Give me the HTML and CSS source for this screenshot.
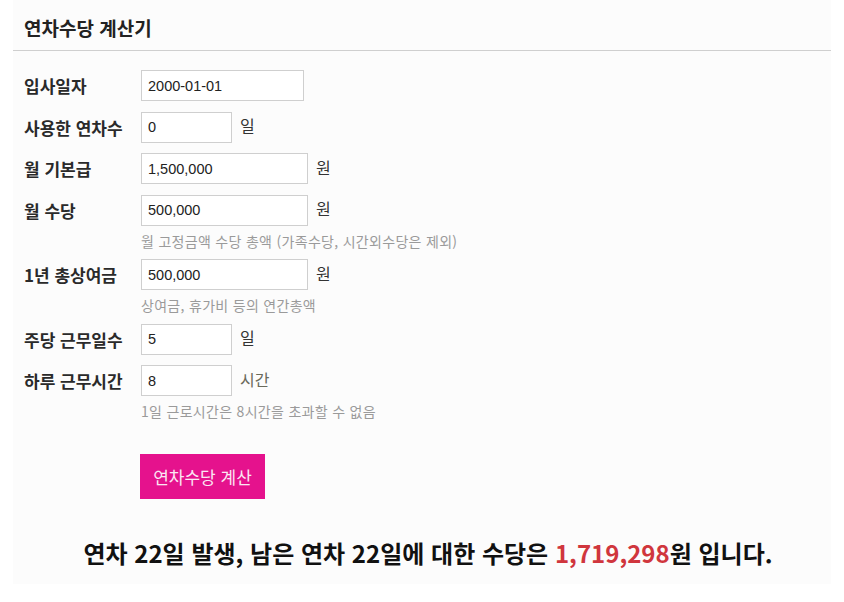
FILE: index.html
```html
<!DOCTYPE html>
<html lang="ko">
<head>
<meta charset="utf-8">
<title>연차수당 계산기</title>
<link rel="stylesheet" href="styles.css">
</head>
<body>
<div class="panel">
  <div class="header"><h1 class="title">연차수당 계산기</h1></div>
  <form class="form">
    <div class="field">
      <div class="row"><label class="label">입사일자</label><input class="input w163" type="text" value="2000-01-01"></div>
    </div>
    <div class="field">
      <div class="row"><label class="label">사용한 연차수</label><input class="input w91" type="text" value="0"><span class="unit">일</span></div>
    </div>
    <div class="field">
      <div class="row"><label class="label">월 기본급</label><input class="input w167" type="text" value="1,500,000"><span class="unit">원</span></div>
    </div>
    <div class="field">
      <div class="row"><label class="label">월 수당</label><input class="input w167" type="text" value="500,000"><span class="unit">원</span></div>
      <div class="hint">월 고정금액 수당 총액 (가족수당, 시간외수당은 제외)</div>
    </div>
    <div class="field">
      <div class="row"><label class="label">1년 총상여금</label><input class="input w167" type="text" value="500,000"><span class="unit">원</span></div>
      <div class="hint">상여금, 휴가비 등의 연간총액</div>
    </div>
    <div class="field">
      <div class="row"><label class="label">주당 근무일수</label><input class="input w91" type="text" value="5"><span class="unit">일</span></div>
    </div>
    <div class="field">
      <div class="row"><label class="label">하루 근무시간</label><input class="input w91" type="text" value="8"><span class="unit unit-light">시간</span></div>
      <div class="hint">1일 근로시간은 8시간을 초과할 수 없음</div>
    </div>
    <div class="actions"><button type="button" class="btn">연차수당 계산</button></div>
  </form>
  <p class="result">연차 22일 발생, 남은 연차 22일에 대한 수당은 <span class="amount">1,719,298</span>원 입니다.</p>
</div>
</body>
</html>
```

FILE: styles.css
```css
html, body {
  margin: 0;
  padding: 0;
  background: #ffffff;
}
body {
  font-family: "Noto Sans CJK KR", "Noto Sans", sans-serif;
  color: #222;
}
.panel {
  margin-left: 13px;
  width: 818px;
  height: 584px;
  background: #fcfcfc;
  box-sizing: border-box;
}
.header {
  height: 51px;
  box-sizing: border-box;
  padding: 18px 0 0 11px;
  border-bottom: 1px solid #cfcfcf;
}
.title {
  margin: 0;
  font-size: 19px;
  line-height: 20px;
  font-weight: 700;
  color: #222;
}
.form {
  margin: 0;
  padding: 19px 0 0 11px;
}
.field {
  margin-bottom: 10.5px;
}
.row {
  display: flex;
  align-items: center;
  height: 31px;
}
.label {
  width: 117px;
  flex: none;
  font-size: 17px;
  font-weight: 700;
  color: #2a2a2a;
}
.input {
  box-sizing: border-box;
  height: 31px;
  border: 1px solid #cfcfcf;
  background: #fff;
  padding: 0 6px;
  font-family: "Liberation Sans", sans-serif;
  font-size: 14.5px;
  color: #222;
  outline: none;
}
.w163 { width: 163px; }
.w167 { width: 167px; }
.w91 { width: 91px; }
.unit {
  margin-left: 8px;
  margin-top: -4px;
  font-size: 16px;
  color: #333;
}
.unit-light {
  color: #6a6a5a;
}
.hint {
  margin: 8px 0 0 117px;
  font-size: 14px;
  letter-spacing: 0.3px;
  line-height: 15px;
  color: #9a9a9a;
}
.actions {
  padding: 24px 0 0 116px;
}
.btn {
  width: 125px;
  height: 45px;
  border: none;
  background: #e5128d;
  color: #fbe6f3;
  font-family: "Noto Sans CJK KR", sans-serif;
  font-size: 17px;
  padding: 0;
  cursor: pointer;
}
.result {
  margin: 38px 0 0;
  padding-left: 12px;
  text-align: center;
  font-size: 24px;
  line-height: 32px;
  font-weight: 700;
  color: #111;
}
.amount {
  color: #d0363d;
}
```
